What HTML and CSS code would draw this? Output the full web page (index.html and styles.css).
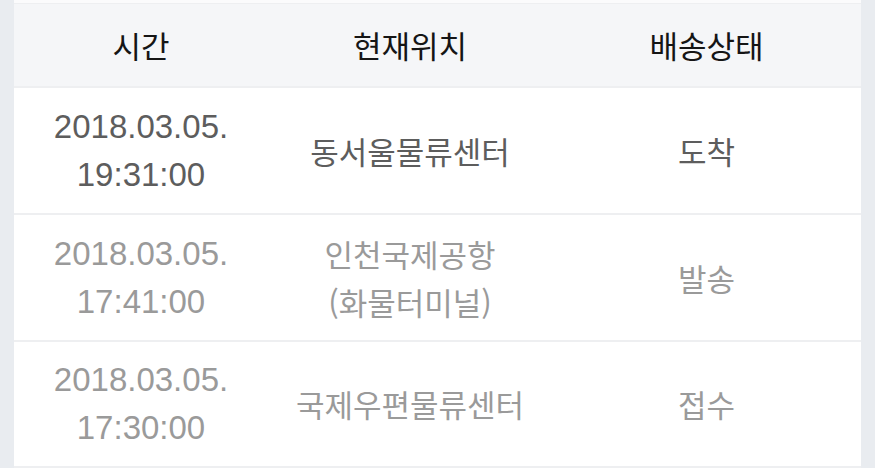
FILE: index.html
```html
<!DOCTYPE html>
<html lang="ko">
<head>
<meta charset="utf-8">
<link rel="stylesheet" href="styles.css">
</head>
<body>
<div class="page">
  <div class="table">
    <div class="row head">
      <div class="cell">시간</div>
      <div class="cell">현재위치</div>
      <div class="cell">배송상태</div>
    </div>
    <div class="row current">
      <div class="cell num">2018.03.05.<br>19:31:00</div>
      <div class="cell">동서울물류센터</div>
      <div class="cell">도착</div>
    </div>
    <div class="row past">
      <div class="cell num">2018.03.05.<br>17:41:00</div>
      <div class="cell">인천국제공항<br>(화물터미널)</div>
      <div class="cell">발송</div>
    </div>
    <div class="row past last">
      <div class="cell num">2018.03.05.<br>17:30:00</div>
      <div class="cell">국제우편물류센터</div>
      <div class="cell">접수</div>
    </div>
  </div>
</div>
</body>
</html>
```
FILE: styles.css
```css
* { box-sizing: border-box; }
html, body { margin: 0; padding: 0; }
body {
  width: 875px;
  height: 468px;
  overflow: hidden;
  background: #e9ecf0;
  font-family: "Noto Sans CJK KR", "Noto Sans", sans-serif;
}
.page {
  padding: 0 14px 0 14px;
  height: 468px;
}
.table {
  background: #fff;
  border-top: 3px solid #fbfbfc;
}
.row {
  display: grid;
  grid-template-columns: 254px 284px 1fr;
  align-items: center;
  border-bottom: 2px solid #eeeff1;
}
.cell {
  text-align: center;
  font-size: 31px;
  line-height: 48px;
}
.cell.num {
  font-family: "Liberation Sans", Arial, sans-serif;
  font-size: 33px;
}
.head {
  background: #f5f6f8;
  border-top: 1px solid #eeeff1;
  height: 85px;
  color: #151515;
}
.current { height: 127px; color: #5d5d5d; }
.past { height: 127px; color: #9a9a9a; }
.last { height: 126px; }
```
